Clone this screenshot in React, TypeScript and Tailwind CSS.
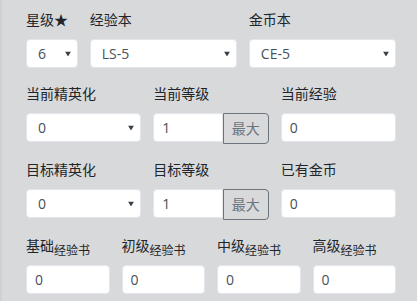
import React from "react";

const font = { fontFamily: '"Open Sans", "Noto Sans CJK SC", sans-serif' };

function Arrow() {
  return (
    <svg className="absolute right-[6px] top-1/2 -translate-y-1/2" width="6" height="5" viewBox="0 0 6 5">
      <path d="M0 0 L6 0 L3 5 Z" fill="#3a3f44" />
    </svg>
  );
}

function Select({ value }: { value: string }) {
  return (
    <div className="relative h-[29px] bg-white rounded-[4px] border border-[#e3e6ea] pl-[11px] flex items-center text-[14px] text-[#495057]">
      {value}
      <Arrow />
    </div>
  );
}

function Input({ value }: { value: string }) {
  return (
    <div className="h-[29px] bg-white rounded-[4px] border border-[#e3e6ea] pl-[8px] flex items-center text-[14px] text-[#495057]">
      {value}
    </div>
  );
}

function LevelInput() {
  return (
    <div className="flex h-[30px]">
      <div className="flex-1 h-[29px] bg-white rounded-l-[4px] border border-[#e3e6ea] pl-[8px] flex items-center text-[14px] text-[#495057]">
        1
      </div>
      <div className="w-[46px] h-[31px] rounded-r-[4px] border border-[#6c757d] flex items-center justify-center text-[14px] text-[#6c757d]">
        最大
      </div>
    </div>
  );
}

function Label({ children }: { children: React.ReactNode }) {
  return <div className="h-[21px] leading-[21px] mb-[9px] text-[14px] text-[#212529] whitespace-nowrap">{children}</div>;
}

function BookLabel({ a }: { a: string }) {
  return (
    <div className="h-[21px] leading-[21px] mb-[9px] text-[14px] text-[#212529] whitespace-nowrap">
      {a}
      <span className="text-[12px] relative top-[4px]">经验书</span>
    </div>
  );
}

export default function App() {
  return (
    <div style={font} className="w-[417px] h-[301px] bg-[#d8d9db] border-l-2 border-[#cfd0d2] pl-[24px] pt-[9px] overflow-hidden">
      <div className="w-[370px] grid grid-cols-12 gap-x-[12px]">
        <div className="col-span-2">
          <Label>星级★</Label>
          <Select value="6" />
        </div>
        <div className="col-span-5">
          <Label>经验本</Label>
          <Select value="LS-5" />
        </div>
        <div className="col-span-5">
          <Label>金币本</Label>
          <Select value="CE-5" />
        </div>

        <div className="col-span-4 mt-[15px]">
          <Label>当前精英化</Label>
          <Select value="0" />
        </div>
        <div className="col-span-4 mt-[15px]">
          <Label>当前等级</Label>
          <LevelInput />
        </div>
        <div className="col-span-4 mt-[15px]">
          <Label>当前经验</Label>
          <Input value="0" />
        </div>

        <div className="col-span-4 mt-[16px]">
          <Label>目标精英化</Label>
          <Select value="0" />
        </div>
        <div className="col-span-4 mt-[16px]">
          <Label>目标等级</Label>
          <LevelInput />
        </div>
        <div className="col-span-4 mt-[16px]">
          <Label>已有金币</Label>
          <Input value="0" />
        </div>

        <div className="col-span-3 mt-[16px]">
          <BookLabel a="基础" />
          <Input value="0" />
        </div>
        <div className="col-span-3 mt-[16px]">
          <BookLabel a="初级" />
          <Input value="0" />
        </div>
        <div className="col-span-3 mt-[16px]">
          <BookLabel a="中级" />
          <Input value="0" />
        </div>
        <div className="col-span-3 mt-[16px]">
          <BookLabel a="高级" />
          <Input value="0" />
        </div>
      </div>
    </div>
  );
}
